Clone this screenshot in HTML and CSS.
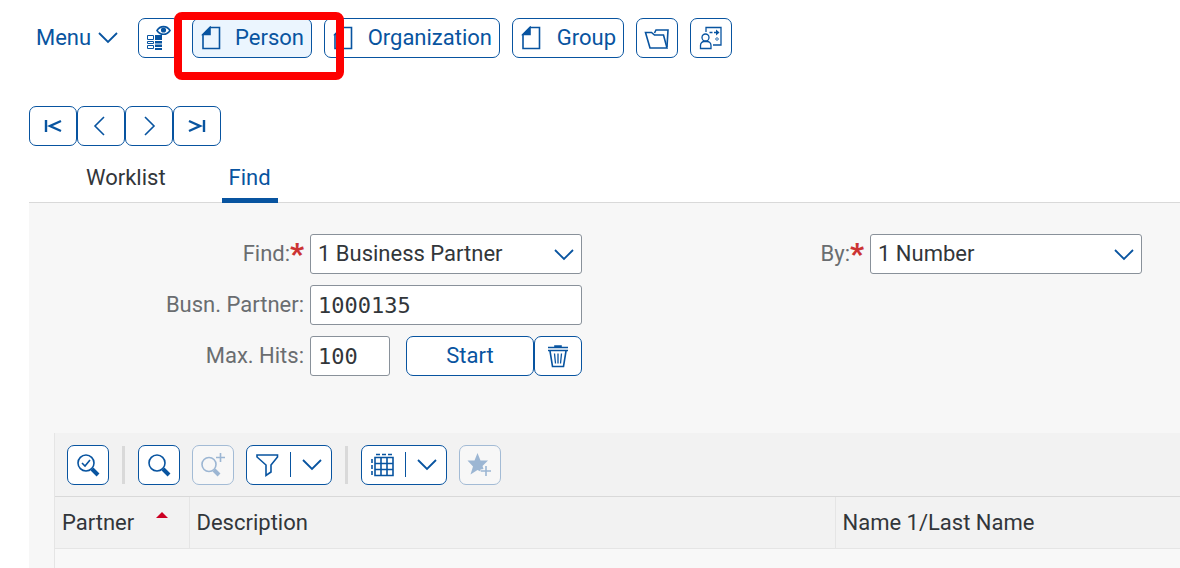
FILE: index.html
```html
<!DOCTYPE html>
<html lang="en">
<head>
<meta charset="utf-8">
<title>Business Partner</title>
<link rel="stylesheet" href="styles.css">
</head>
<body>
<svg class="defs" aria-hidden="true">
  <symbol id="chevron" viewBox="0 0 22 14"><path d="M2 2l9 9 9-9"/></symbol>
  <symbol id="doc" viewBox="0 0 24 24"><path d="M10 1.500h9.500v21h-16.500v-14z"/><path class="solid" d="M3 8.500l7-7v7z"/></symbol>
  <symbol id="lens" viewBox="0 0 24 24"><circle cx="10" cy="10" r="8"/><path class="thick" d="M16 16l6 6"/></symbol>
</svg>

<header class="app-bar">
  <button class="menu-btn" type="button">Menu <svg class="chev"><use href="#chevron"/></svg></button>
  <button class="btn icon-btn" type="button" aria-label="Display locator">
    <svg class="icon" viewBox="0 0 24 24">
      <path d="M10 4.500c3-5.200 10-5.200 13 0c-3 5-10 5-13 0z"/><circle class="solid" cx="16.500" cy="4" r="1.800"/>
      <path class="thin" d="M.5 9.500h6v4h-6zM.5 15.500h6v2h-6zM.5 19.500h6v3h-6z"/>
      <path class="block" d="M8 9h7v5H8zM8 15h7v2.500H8zM8 18.500h7V21H8zM8 22h7v2H8z"/>
    </svg>
  </button>
  <div class="marked">
    <button class="btn doc-btn person" type="button"><svg class="icon"><use href="#doc"/></svg>Person</button>
    <span class="marker"></span>
  </div>
  <button class="btn doc-btn organization" type="button"><svg class="icon"><use href="#doc"/></svg>Organization</button>
  <button class="btn doc-btn group" type="button"><svg class="icon"><use href="#doc"/></svg>Group</button>
  <button class="btn icon-btn" type="button" aria-label="Open">
    <svg class="icon wide" viewBox="0 0 26 24"><path d="M1.500 6.500h6l3 2.500h9l3.500 13h-17z"/><path d="M10.500 7l1.500-3h12l-1 17"/></svg>
  </button>
  <button class="btn icon-btn" type="button" aria-label="Business partner relationships">
    <svg class="icon" viewBox="0 0 24 24"><path class="line" d="M7 6V1.500h15v17.500h-8M10.500 6.500h3M15 6.500h2"/><path class="line" d="M1.500 22.500v-3c0-2.500 2-4 3.500-4h3c2 0 4 1.500 4 4v3z"/><circle class="line" cx="6.500" cy="11.500" r="3.500"/><path class="block" d="M17 3.500l3.500 3-3.500 3z"/><path class="thin" d="M16.500 13l1.500-1.500 1.500 1.500-1.500 1.500z"/></svg>
  </button>
</header>

<nav class="record-nav" aria-label="Records">
  <button class="btn" type="button" aria-label="First"><svg class="icon" viewBox="0 0 24 24"><path class="bold" d="M5 6v12M20 7L9 12l11 5"/></svg></button>
  <button class="btn" type="button" aria-label="Previous"><svg class="icon" viewBox="0 0 24 24"><path d="M15 3l-9 9 9 9"/></svg></button>
  <button class="btn" type="button" aria-label="Next"><svg class="icon" viewBox="0 0 24 24"><path d="M8 3l9 9-9 9"/></svg></button>
  <button class="btn" type="button" aria-label="Last"><svg class="icon" viewBox="0 0 24 24"><path class="bold" d="M19 6v12M4 7l11 5-11 5"/></svg></button>
</nav>

<main class="content">
  <div class="tabs" role="tablist">
    <button class="tab" type="button" role="tab" aria-selected="false">Worklist</button>
    <button class="tab active" type="button" role="tab" aria-selected="true">Find</button>
  </div>

  <section class="panel">
    <form class="search-form">
      <label class="label" for="find">Find:<span class="required">*</span></label>
      <div class="select-box"><select id="find" class="field"><option>1 Business Partner</option></select><svg class="chev"><use href="#chevron"/></svg></div>
      <label class="label" for="by">By:<span class="required">*</span></label>
      <div class="select-box"><select id="by" class="field"><option>1 Number</option></select><svg class="chev"><use href="#chevron"/></svg></div>

      <label class="label first" for="partner">Busn. Partner:</label>
      <input id="partner" class="field mono" type="text" value="1000135">

      <label class="label first" for="hits">Max. Hits:</label>
      <div class="hits-row">
        <input id="hits" class="field mono hits" type="text" value="100">
        <button class="btn start" type="button">Start</button>
        <button class="btn trash" type="button" aria-label="Delete"><svg class="icon" viewBox="0 0 24 24"><path d="M2 3.500h20M2 6.500h20M9 3.500V2h6v1.500M4 7l2.500 15.500h11L20 7"/><path class="line" d="M8.500 9.500l1 10M12 9.500v10M15.500 9.500l-1 10"/></svg></button>
      </div>
    </form>

    <div class="results">
      <div class="grid-bar">
        <button class="btn icon-btn" type="button" aria-label="Details"><svg class="icon" viewBox="0 0 24 24"><use href="#lens"/><path d="M6 10l3 3 5-6"/></svg></button>
        <span class="separator"></span>
        <button class="btn icon-btn" type="button" aria-label="Search"><svg class="icon"><use href="#lens"/></svg></button>
        <button class="btn icon-btn" type="button" aria-label="Find next" disabled><svg class="icon wide" viewBox="0 0 26 24"><circle cx="9" cy="11.500" r="7"/><path class="thick" d="M14 17l5 5"/><path d="M20.500 0v9M16 4.500h9"/></svg></button>
        <button class="btn split" type="button" aria-label="Filter"><svg class="icon" viewBox="0 0 24 24"><path d="M2 2h20.500v2l-6.500 8v7l-5 3.500v-10.500l-9-8z"/></svg><span class="rule"></span><svg class="chev"><use href="#chevron"/></svg></button>
        <span class="separator"></span>
        <button class="btn split" type="button" aria-label="Layout"><svg class="icon" viewBox="0 0 24 24"><path d="M5 4.500h18v18h-18zM11 4.500v18M17 4.500v18M5 10.500h18M5 16.500h18"/><path stroke-dasharray="4 2" d="M6 1.500h17M2 6v17"/></svg><span class="rule"></span><svg class="chev"><use href="#chevron"/></svg></button>
        <button class="btn icon-btn" type="button" aria-label="Add favorite" disabled><svg class="icon wide" viewBox="0 0 26 24"><path class="block" d="M10.500 0l3 7.500H21l-5.500 5.500 1 3-3 .5v2l-3-1.500-7 4.500 2.500-8L.5 7.500h7z"/><path d="M19 13v10M14 18h10"/></svg></button>
      </div>
      <table class="grid">
        <colgroup><col class="col-partner"><col class="col-description"><col></colgroup>
        <thead><tr>
          <th scope="col"><span class="sorted">Partner<svg class="sort" viewBox="0 0 12 6"><path d="M0 6l6-6 6 6z"/></svg></span></th>
          <th scope="col">Description</th>
          <th scope="col">Name 1/Last Name</th>
        </tr></thead>
        <tbody><tr><td></td><td colspan="2"></td></tr></tbody>
      </table>
    </div>
  </section>
</main>
</body>
</html>
```
FILE: styles.css
```css
* { box-sizing: border-box; }

html { height: 100%; overflow: hidden; }

body {
  display: flex;
  flex-direction: column;
  height: 100%;
  margin: 0;
  background: #fff;
  color: #32363a;
  font: 22px/28px Roboto, "Liberation Sans", sans-serif;
}

button, input, select { margin: 0; font: inherit; }

.defs { position: absolute; width: 0; height: 0; }

svg { flex: none; fill: none; stroke: currentColor; stroke-width: 1.6; overflow: visible; }
.solid { fill: currentColor; }
.block { fill: currentColor; stroke: none; }
.thin { stroke-width: 1; }
.line { stroke-width: 1.3; }
.thick { stroke-width: 4; }
.bold { stroke-width: 2.4; }

.icon { width: 24px; height: 24px; }
.icon.wide { width: 26px; }
.chev { width: 22px; height: 14px; stroke-width: 1.8; }

.btn {
  display: flex;
  align-items: center;
  justify-content: center;
  height: 40px;
  padding: 0;
  border: 1px solid #0854a0;
  border-radius: 7px;
  background: #fff;
  color: #0854a0;
}
.btn:disabled { border-color: #a3bbd5; background: #f7f7f7; color: #9cb6d3; }

.icon-btn { width: 42px; }

.app-bar {
  display: flex;
  align-items: center;
  gap: 12px;
  padding: 18px 36px 0;
}

.menu-btn {
  display: flex;
  align-items: center;
  gap: 6px;
  width: 90px;
  padding: 0;
  border: 0;
  background: none;
  color: #0854a0;
}

.doc-btn { justify-content: space-between; padding: 0 7px; }
.person { width: 120px; background: #ebf5fe; }
.organization { width: 176px; }
.group { width: 112px; }

.marked { position: relative; }
.marker {
  position: absolute;
  inset: -6px -32px -22px -18px;
  border: 8px solid #fe0000;
  border-radius: 8px;
  z-index: 1;
}

.record-nav { display: flex; padding: 48px 29px 0; }
.record-nav .btn { width: 48px; }

.content {
  display: flex;
  flex: 1;
  flex-direction: column;
  margin-left: 29px;
}

.tabs {
  display: flex;
  gap: 49px;
  height: 57px;
  padding: 12px 50px 0;
  border-bottom: 1px solid #d9d9d9;
}
.tab {
  height: 45px;
  padding: 0 7px;
  border: 0;
  border-bottom: 5px solid transparent;
  background: none;
  color: #32363a;
}
.tab.active { border-color: #0854a0; color: #0854a0; }

.panel {
  display: flex;
  flex: 1;
  flex-direction: column;
  gap: 57px;
  padding: 31px 0 0 25px;
  background: #f7f7f7;
}

.search-form {
  display: grid;
  grid-template-columns: 250px 272px 276px 272px;
  column-gap: 6px;
  row-gap: 11px;
  align-items: center;
}

.label { display: flex; justify-content: flex-end; color: #6a6d70; }
.label.first { grid-column: 1; }
.required { color: #cc3333; font-size: 30px; font-weight: 900; }

.field {
  width: 100%;
  height: 40px;
  padding: 0 7px;
  border: 1px solid #89919a;
  border-radius: 3px;
  background: #fff;
  color: #32363a;
}
.mono { font-family: "DejaVu Sans Mono", monospace; }

.select-box { position: relative; }
.select-box .field { appearance: none; }
.select-box .chev {
  position: absolute;
  top: 14px;
  right: 7px;
  color: #0854a0;
  pointer-events: none;
}

.hits-row { display: flex; }
.hits { width: 80px; margin-right: 16px; }
.start { flex: 1; }
.trash { width: 48px; }

.results { display: flex; flex: 1; flex-direction: column; border-left: 1px solid #e5e5e5; }

.grid-bar {
  display: flex;
  align-items: center;
  gap: 12px;
  height: 63px;
  padding: 0 12px;
  background: #f2f2f2;
}
.separator { width: 3px; height: 38px; margin: 0 1px; background: #d9d9d9; }
.split { justify-content: space-between; width: 86px; padding: 0 8px; }
.rule { width: 1px; height: 25px; background: #0854a0; }

.grid { width: 100%; table-layout: fixed; border-collapse: collapse; }
.col-partner { width: 134px; }
.col-description { width: 646px; }
.grid th {
  height: 52px;
  padding: 0 7px;
  border: solid #e5e5e5;
  border-width: 1px 0 1px 1px;
  border-top-color: #d9d9d9;
  background: #f2f2f2;
  font-weight: 400;
  text-align: left;
}
.grid th:first-child { border-left: 0; }
.sorted { display: flex; gap: 22px; }
.sort { width: 12px; height: 6px; margin-top: 3px; fill: #cc0022; stroke: none; }
.grid td { height: 20px; padding: 0; background: #f8f8f8; }
```
